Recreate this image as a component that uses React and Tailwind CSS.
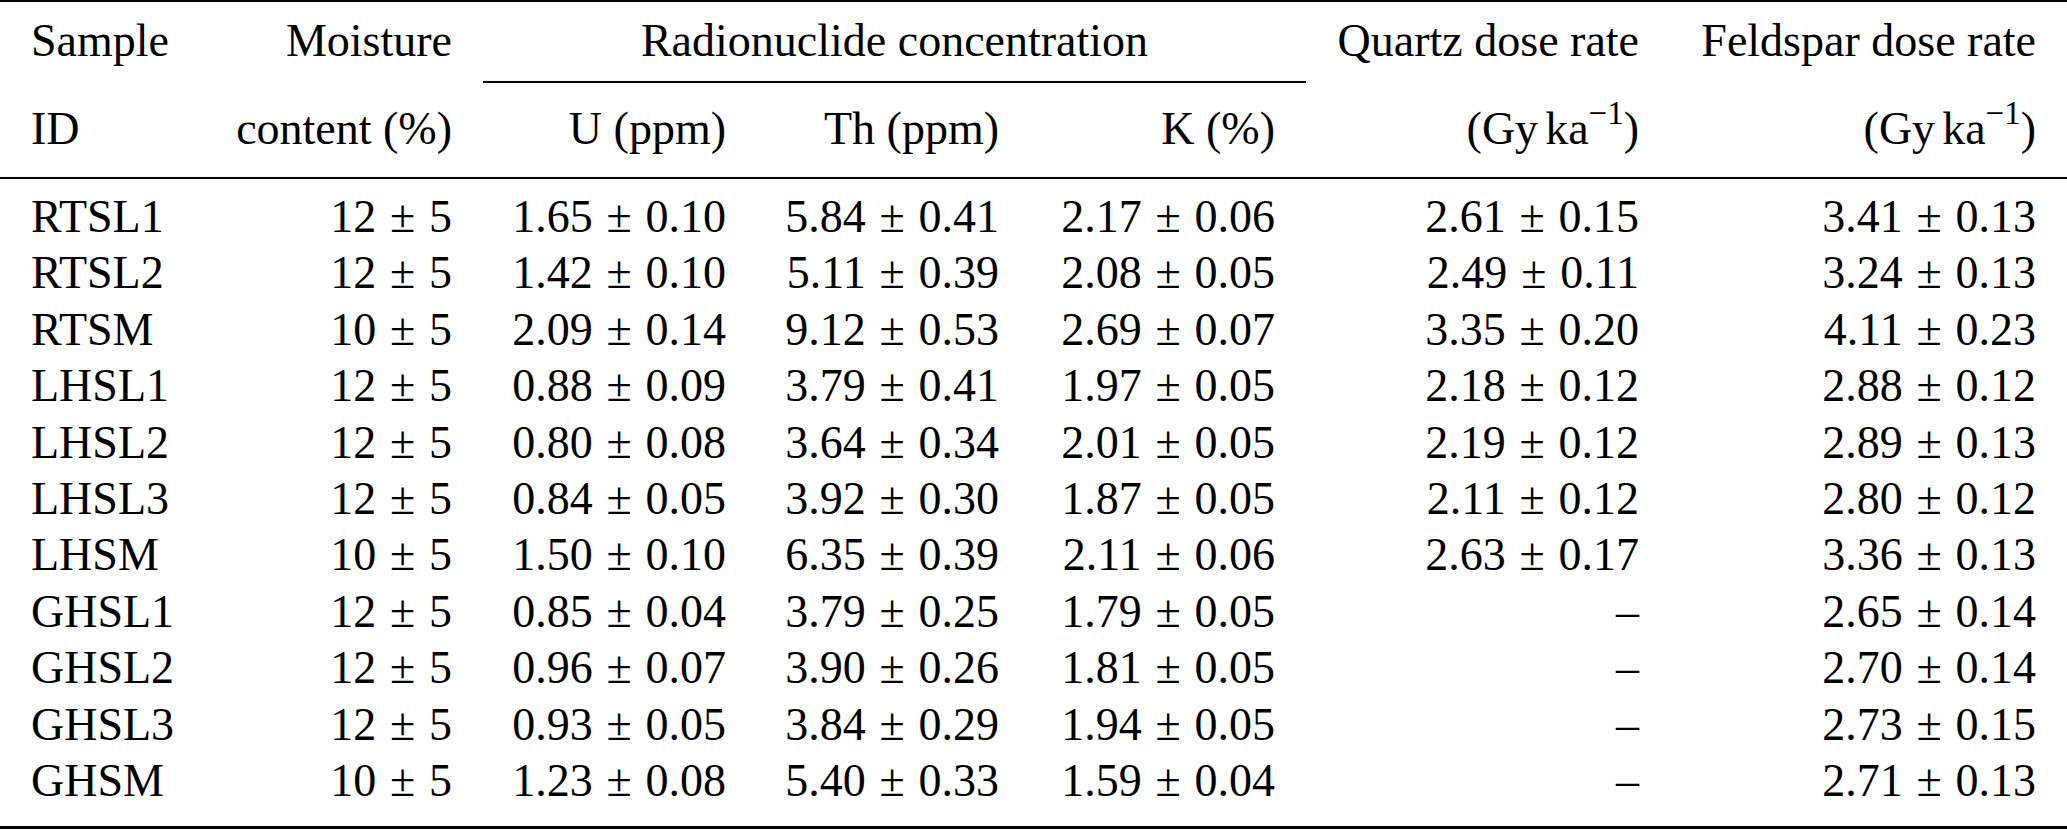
import React from "react";

const rows = [
  ["RTSL1", "12", "5", "1.65", "0.10", "5.84", "0.41", "2.17", "0.06", "2.61", "0.15", "3.41", "0.13"],
  ["RTSL2", "12", "5", "1.42", "0.10", "5.11", "0.39", "2.08", "0.05", "2.49", "0.11", "3.24", "0.13"],
  ["RTSM", "10", "5", "2.09", "0.14", "9.12", "0.53", "2.69", "0.07", "3.35", "0.20", "4.11", "0.23"],
  ["LHSL1", "12", "5", "0.88", "0.09", "3.79", "0.41", "1.97", "0.05", "2.18", "0.12", "2.88", "0.12"],
  ["LHSL2", "12", "5", "0.80", "0.08", "3.64", "0.34", "2.01", "0.05", "2.19", "0.12", "2.89", "0.13"],
  ["LHSL3", "12", "5", "0.84", "0.05", "3.92", "0.30", "1.87", "0.05", "2.11", "0.12", "2.80", "0.12"],
  ["LHSM", "10", "5", "1.50", "0.10", "6.35", "0.39", "2.11", "0.06", "2.63", "0.17", "3.36", "0.13"],
  ["GHSL1", "12", "5", "0.85", "0.04", "3.79", "0.25", "1.79", "0.05", null, null, "2.65", "0.14"],
  ["GHSL2", "12", "5", "0.96", "0.07", "3.90", "0.26", "1.81", "0.05", null, null, "2.70", "0.14"],
  ["GHSL3", "12", "5", "0.93", "0.05", "3.84", "0.29", "1.94", "0.05", null, null, "2.73", "0.15"],
  ["GHSM", "10", "5", "1.23", "0.08", "5.40", "0.33", "1.59", "0.04", null, null, "2.71", "0.13"],
];

const cols = "grid grid-cols-[200px_283px_274px_273px_276px_364px_397px] whitespace-nowrap";

const Pm = ({ a, b }) => {
  if (a === null) return <span>–</span>;
  return (
    <span>
      {a}
      <span className="mx-[0.3em]">±</span>
      {b}
    </span>
  );
};

const Unit = () => (
  <span>
    (Gy<span className="ml-[7px]">ka</span>
    <sup className="text-[33px] top-[-20px]">−1</sup>)
  </span>
);

const App = () => {
  return (
    <div className="w-[2067px] bg-white text-black font-['Liberation_Serif',serif] text-[46px] leading-[56px]">
      <div className="border-t-2 border-black" />

      {/* header, first line */}
      <div className={cols}>
        <div className="px-[31px] pt-[11px] pb-[12px]">Sample</div>
        <div className="pl-[10px] pr-[31px] pt-[11px] pb-[12px] text-right">Moisture</div>
        <div className="col-span-3 pt-[11px] pb-[12px] text-center border-b-2 border-black">
          Radionuclide concentration
        </div>
        <div className="pl-[10px] pr-[31px] pt-[11px] pb-[12px] text-right">Quartz dose rate</div>
        <div className="pl-[10px] pr-[31px] pt-[11px] pb-[12px] text-right">Feldspar dose rate</div>
      </div>

      {/* header, second line */}
      <div className={`${cols} border-b-2 border-black`}>
        <div className="px-[31px] pt-[18px] pb-[20px]">ID</div>
        <div className="pl-[10px] pr-[31px] pt-[18px] pb-[20px] text-right">content (%)</div>
        <div className="pl-[10px] pr-[31px] pt-[18px] pb-[20px] text-right">U (ppm)</div>
        <div className="pl-[10px] pr-[31px] pt-[18px] pb-[20px] text-right">Th (ppm)</div>
        <div className="pl-[10px] pr-[31px] pt-[18px] pb-[20px] text-right">K (%)</div>
        <div className="pl-[10px] pr-[31px] pt-[18px] pb-[20px] text-right">
          <Unit />
        </div>
        <div className="pl-[10px] pr-[31px] pt-[18px] pb-[20px] text-right">
          <Unit />
        </div>
      </div>

      {/* body */}
      <div className={`${cols} pt-[10px] pb-[17px] border-b-[3px] border-black leading-[56.4px]`}>
        {rows.map((r) => (
          <React.Fragment key={r[0]}>
            <div className="px-[31px]">{r[0]}</div>
            <div className="pl-[10px] pr-[31px] text-right">
              <Pm a={r[1]} b={r[2]} />
            </div>
            <div className="pl-[10px] pr-[31px] text-right">
              <Pm a={r[3]} b={r[4]} />
            </div>
            <div className="pl-[10px] pr-[31px] text-right">
              <Pm a={r[5]} b={r[6]} />
            </div>
            <div className="pl-[10px] pr-[31px] text-right">
              <Pm a={r[7]} b={r[8]} />
            </div>
            <div className="pl-[10px] pr-[31px] text-right">
              <Pm a={r[9]} b={r[10]} />
            </div>
            <div className="pl-[10px] pr-[31px] text-right">
              <Pm a={r[11]} b={r[12]} />
            </div>
          </React.Fragment>
        ))}
      </div>
    </div>
  );
};

export default App;
